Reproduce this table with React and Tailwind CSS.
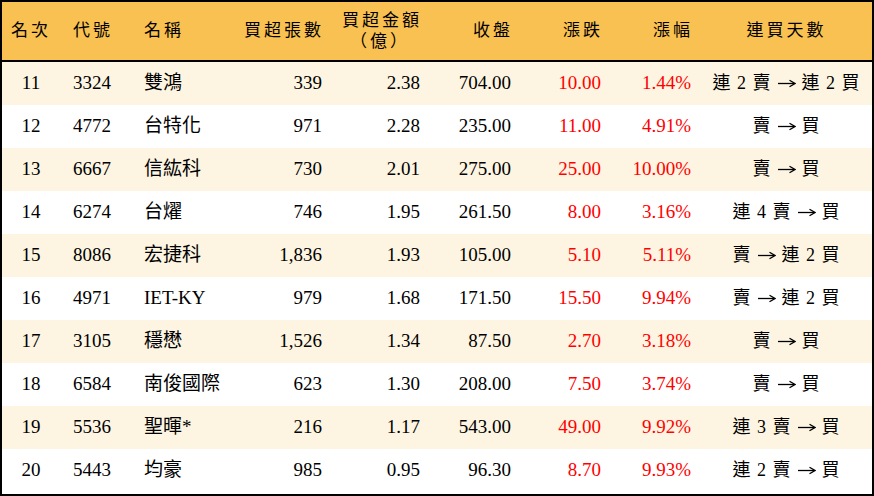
const rows = [
  ['11', '3324', '雙鴻', '339', '2.38', '704.00', '10.00', '1.44%', ['連 2 賣', '連 2 買']],
  ['12', '4772', '台特化', '971', '2.28', '235.00', '11.00', '4.91%', ['賣', '買']],
  ['13', '6667', '信紘科', '730', '2.01', '275.00', '25.00', '10.00%', ['賣', '買']],
  ['14', '6274', '台燿', '746', '1.95', '261.50', '8.00', '3.16%', ['連 4 賣', '買']],
  ['15', '8086', '宏捷科', '1,836', '1.93', '105.00', '5.10', '5.11%', ['賣', '連 2 買']],
  ['16', '4971', 'IET-KY', '979', '1.68', '171.50', '15.50', '9.94%', ['賣', '連 2 買']],
  ['17', '3105', '穩懋', '1,526', '1.34', '87.50', '2.70', '3.18%', ['賣', '買']],
  ['18', '6584', '南俊國際', '623', '1.30', '208.00', '7.50', '3.74%', ['賣', '買']],
  ['19', '5536', '聖暉*', '216', '1.17', '543.00', '49.00', '9.92%', ['連 3 賣', '買']],
  ['20', '5443', '均豪', '985', '0.95', '96.30', '8.70', '9.93%', ['連 2 賣', '買']],
]

const cols = 'grid grid-cols-[58px_74px_98px_100px_98px_91px_90px_90px_171px]'
const font = { fontFamily: '"Liberation Serif", "Noto Sans CJK TC", serif' }

function Arrow() {
  return (
    <svg width="18" height="10" viewBox="0 0 18 10" className="relative -top-[2px] mx-[6px] inline-block align-middle">
      <path d="M0 5.5H16" stroke="black" strokeWidth="1.3" />
      <path d="M11.5 2.2L17 5.5L11.5 8.8" fill="none" stroke="black" strokeWidth="1.3" />
    </svg>
  )
}

export default function App() {
  return (
    <div className="h-[496px] w-[874px] border-2 border-black bg-white text-black" style={font}>
      <div className={`${cols} h-[60px] items-center border-b-2 border-black bg-[#f9c151] text-[17px] tracking-[3px]`}>
        <div className="text-center">名次</div>
        <div className="pl-[13px]">代號</div>
        <div className="pl-[10px]">名稱</div>
        <div className="pr-[8px] text-right">買超張數</div>
        <div className="pr-[8px] text-right leading-[21px]">
          <div>買超金額</div>
          <div className="pr-[12px]">（億）</div>
        </div>
        <div className="pr-[8px] text-right">收盤</div>
        <div className="pr-[8px] text-right">漲跌</div>
        <div className="pr-[8px] text-right">漲幅</div>
        <div className="text-center">連買天數</div>
      </div>
      {rows.map((r, i) => (
        <div
          key={r[0]}
          className={`${cols} h-[43px] items-center text-[19px] ${i % 2 === 0 ? 'bg-[#fdf5e2]' : 'bg-white'}`}
        >
          <div className="text-center">{r[0]}</div>
          <div className="pl-[13px]">{r[1]}</div>
          <div className="pl-[10px]">{r[2]}</div>
          <div className="pr-[10px] text-right">{r[3]}</div>
          <div className="pr-[10px] text-right">{r[4]}</div>
          <div className="pr-[10px] text-right">{r[5]}</div>
          <div className="pr-[10px] text-right text-[#ff0000]">{r[6]}</div>
          <div className="pr-[10px] text-right text-[#ff0000]">{r[7]}</div>
          <div className="text-center text-[18px] tracking-[1px]">
            {r[8][0]}
            <Arrow />
            {r[8][1]}
          </div>
        </div>
      ))}
    </div>
  )
}
